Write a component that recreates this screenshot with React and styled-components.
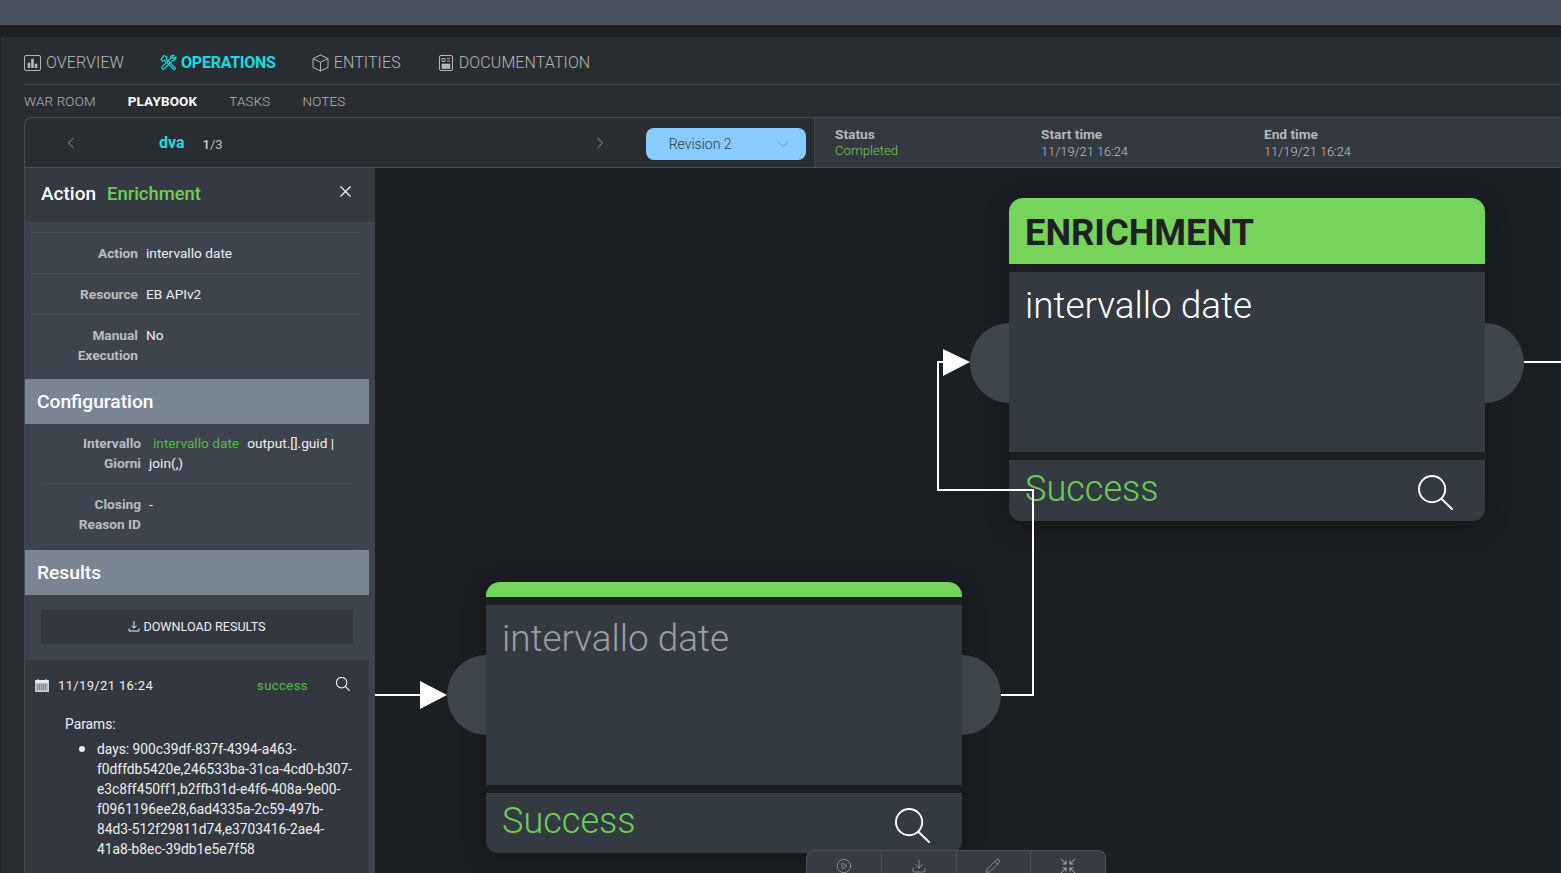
import React from 'react';
import styled, { createGlobalStyle } from 'styled-components';
import { X, ChevronLeft, ChevronRight, ChevronDown, CirclePlay, Download, Pencil } from 'lucide-react';

const GlobalStyle = createGlobalStyle`
  html, body {
    margin: 0;
    height: 100%;
    background: #1c1f24;
    font-family: Roboto, "Liberation Sans", sans-serif;
  }
  * { box-sizing: border-box; }
`

const Page = styled.div`
  display: flex;
  flex-direction: column;
  width: 1561px;
  height: 873px;
  overflow: hidden;
`

const TopBar = styled.div`
  height: 25px;
  flex: none;
  background: #4a525f;
`

const TopGap = styled.div`
  height: 12px;
  flex: none;
  background: #1c1f24;
`

const Main = styled.div`
  flex: 1;
  min-height: 0;
  display: flex;
  flex-direction: column;
  background: #292d32;
  padding-left: 24px;
  box-shadow: inset 1px 0 0 #1f2226;
`

const Tabs = styled.div`
  height: 48px;
  flex: none;
  display: flex;
  align-items: center;
  gap: 36px;
  padding-top: 4px;
  border-bottom: 1px solid #42474f;
`

const Tab = styled.div`
  display: flex;
  align-items: center;
  gap: ${p => (p.$active ? 4 : 5)}px;
  font-size: 16px;
  font-weight: ${p => (p.$active ? 700 : 300)};
  color: ${p => (p.$active ? '#12dfe0' : '#b4b8bd')};
  letter-spacing: ${p => (p.$active ? '-0.25px' : '0.1px')};
  svg { flex: none; }
`

const SubTabs = styled.div`
  height: 32px;
  flex: none;
  display: flex;
  align-items: center;
  gap: 32px;
`

const SubTab = styled.div`
  font-size: 13.4px;
  font-weight: ${p => (p.$active ? 700 : 300)};
  color: ${p => (p.$active ? '#ffffff' : '#b4b8bd')};
  letter-spacing: 0.2px;
`

const Workspace = styled.div`
  flex: 1;
  min-height: 0;
  display: flex;
  flex-direction: column;
  border-top: 1px solid #44484f;
  border-left: 1px solid #44484f;
  border-top-left-radius: 8px;
`

const Toolbar = styled.div`
  height: 50px;
  flex: none;
  display: flex;
  border-bottom: 1px solid #4a4e55;
`

const NavArea = styled.div`
  width: 790px;
  flex: none;
  display: flex;
  align-items: center;
  border-right: 1px solid #3e424a;
  color: #9499a0;
`

const NavArrow = styled.div`
  width: 20px;
  display: flex;
  justify-content: center;
  margin-left: ${p => p.$left}px;
`

const PlaybookName = styled.span`
  font-size: 16px;
  font-weight: 700;
  color: #1fdcdc;
  margin-left: 78px;
`

const Counter = styled.span`
  font-size: 13px;
  color: #b9bcc0;
  margin-left: 18px;
  margin-top: 3px;
  b { font-weight: 500; color: #d5d7da; }
`

const RevisionSelect = styled.div`
  width: 160px;
  height: 32px;
  margin: 2px 0 0 36px;
  padding: 0 13px 0 23px;
  display: flex;
  align-items: center;
  justify-content: space-between;
  background: #89cbff;
  border-radius: 8px;
  font-size: 14px;
  font-weight: 300;
  color: #2f3943;
  svg { color: #5f8db3; }
`

const StatusArea = styled.div`
  flex: 1;
  display: flex;
  padding-left: 20px;
  background: #343841;
`

const StatusCol = styled.div`
  width: ${p => p.$width}px;
  padding-top: 8px;
  line-height: 16px;
`

const StatusLabel = styled.div`
  font-size: 13.7px;
  font-weight: 700;
  color: #b4b7bb;
`

const StatusValue = styled.div`
  font-size: ${p => (p.$green ? '13.2px' : '12.8px')};
  font-weight: 300;
  margin-top: ${p => (p.$green ? 1 : 2)}px;
  color: ${p => (p.$green ? '#6ccf52' : '#c0c3c7')};
`

const Body = styled.div`
  flex: 1;
  min-height: 0;
  display: flex;
`

const Sidebar = styled.aside`
  width: 350px;
  flex: none;
  display: flex;
  flex-direction: column;
  background: #3e444e;
  overflow: hidden;
`

const SidebarHead = styled.div`
  height: 54px;
  flex: none;
  display: flex;
  align-items: center;
  padding: 0 20px 3px 16px;
  background: #353a42;
  font-size: 19px;
  font-weight: 500;
  color: #fff;
  span { color: #6ccf52; margin-left: 11px; font-size: 18.4px; }
  svg { margin-left: auto; margin-top: -4px; }
`

const Details = styled.div`
  width: 344px;
  padding: 10px 9px 0 6px;
`

const Row = styled.div`
  display: flex;
  gap: 8px;
  padding: 10px 0;
  border-top: 1px solid #4a505a;
  font-size: 13.7px;
  line-height: 20px;
  color: #eef0f2;
  min-height: ${p => p.$min || 41}px;
`

const RowLabel = styled.div`
  width: ${p => p.$width}px;
  flex: none;
  text-align: right;
  font-weight: 700;
  color: #b9bdc2;
`

const Section = styled.div`
  width: 344px;
  height: 45px;
  flex: none;
  display: flex;
  align-items: center;
  padding-left: 12px;
  background: #7a8594;
  font-size: 19.2px;
  font-weight: 500;
  color: #fff;
`

const Config = styled.div`
  width: 344px;
  height: 126px;
  flex: none;
  padding: 0 16px;
`

const ConfigRow = styled(Row)`
  border-top: 0;
  border-bottom: 1px solid #4a505a;
  padding: 9px 0 10px;
  min-height: 0;
  height: 60px;
  &:last-child { height: 61px; padding-top: 10px; }
`

const GreenText = styled.span`
  color: #56bb46;
  margin: 0 8px 0 4px;
`

const DownloadArea = styled.div`
  width: 344px;
  height: 65px;
  flex: none;
  padding: 15px 16px 0;
`

const DownloadButton = styled.div`
  height: 34px;
  padding-bottom: 2px;
  display: flex;
  align-items: center;
  justify-content: center;
  gap: 3px;
  background: #33373f;
  color: #f0f1f3;
  font-size: 12.6px;
`

const Results = styled.div`
  width: 344px;
  flex: 1;
  background: #33373f;
  color: #eef0f2;
  font-size: 13.8px;
`

const ResultHead = styled.div`
  height: 50px;
  display: flex;
  align-items: center;
  padding: 0 0 0 10px;
  font-size: 13px;
  letter-spacing: 0.35px;
`

const ResultDate = styled.span`
  margin-left: 9px;
`

const ResultStatus = styled.span`
  margin-left: 104px;
  font-size: 13.2px;
  color: #56bb46;
`

const ResultSearch = styled.span`
  display: flex;
  margin-left: 28px;
  margin-top: -3px;
`

const Params = styled.div`
  padding: 4px 0 0 40px;
  line-height: 20px;
  ul { margin: 4px 0 0; padding-left: 32px; width: 292px; }
  li::marker { font-size: 18px; }
`

const Canvas = styled.div`
  position: relative;
  flex: 1;
  background: #1b1e22;
  overflow: hidden;
`

const Wires = styled.svg`
  position: absolute;
  inset: 0;
  width: 100%;
  height: 100%;
  z-index: 3;
`

const Node = styled.div`
  position: absolute;
  left: ${p => p.$x}px;
  top: ${p => p.$y}px;
  width: 476px;
  z-index: 2;
  background: #1d1e24;
  border-radius: 14px 14px 12px 12px;
  box-shadow: 0 6px 24px rgba(0, 0, 0, 0.25);
`

const Port = styled.div`
  position: absolute;
  top: ${p => p.$top}px;
  ${p => p.$side}: -39px;
  width: 78px;
  height: 80px;
  border-radius: 50%;
  background: #3e454d;
  z-index: -1;
`

const NodeHead = styled.div`
  height: ${p => p.$height}px;
  padding: 2px 0 0 16px;
  display: flex;
  align-items: center;
  background: #77d45a;
  border-radius: 14px 14px 0 0;
  font-size: 36.3px;
  font-weight: 700;
  color: #1f2126;
`

const NodeBody = styled.div`
  height: 180px;
  margin-top: 8px;
  padding: 9px 16px;
  background: #343a42;
  font-size: 36.9px;
  line-height: 50px;
  font-weight: 300;
  color: ${p => (p.$dim ? '#9a9ea5' : '#ffffff')};
`

const NodeFoot = styled.div`
  height: ${p => p.$height}px;
  margin-top: 8px;
  padding: 0 32px 4px 16px;
  display: flex;
  align-items: center;
  justify-content: space-between;
  background: #343a42;
  border-radius: 0 0 12px 12px;
  font-size: 36.1px;
  font-weight: 300;
  color: #6ccf52;
  svg { margin-top: 8px; }
`

const Actions = styled.div`
  position: absolute;
  left: 431px;
  bottom: 0;
  width: 300px;
  height: 23px;
  z-index: 4;
  display: flex;
  background: #363b44;
  border: 1px solid #4c5159;
  border-bottom: 0;
  border-radius: 8px 8px 0 0;
  overflow: hidden;
`

const ActionCell = styled.div`
  flex: 1;
  display: flex;
  justify-content: center;
  padding-top: 7px;
  color: #b0b4b9;
  & + & { border-left: 1px solid #4c5159; }
`

const OverviewIcon = () => (
  <svg width="17" height="17" viewBox="0 0 17 17" fill="none" stroke="#b4b8bd">
    <rect x="0.5" y="1.5" width="16" height="15" rx="1.5" />
    <path d="M4 14V9h2v5M7.5 14V5h2v9M11 14v-4h2v4" fill="#b4b8bd" strokeWidth="0.6" />
  </svg>
)

const ToolsIcon = () => (
  <svg width="17" height="17" viewBox="0 0 17 17" fill="none" stroke="#12dfe0" strokeWidth="1.2">
    <path d="M4 1.5 7 3.2 6.2 5 15.5 14.2 14 15.7 4.7 6.4 3 7.2 1 5.5Z" />
    <path d="M15.8 2.8 13.6 5 12 3.6 14 1.4C12 .8 10 2.4 10.4 4.6L2 12.8C1 14 3 16 4.2 15L12.4 6.6C14.6 7 16.4 5 15.8 2.8Z" />
  </svg>
)

const BoxIcon = () => (
  <svg width="17" height="18" viewBox="0 0 17 18" fill="none" stroke="#b4b8bd" strokeWidth="1">
    <path d="M8.5 1 16 4.6V13.4L8.5 17 1 13.4V4.6Z" />
    <path d="M1 4.6 8.5 8.2 16 4.6M8.5 8.2V17" />
  </svg>
)

const DocIcon = () => (
  <svg width="16" height="18" viewBox="0 0 16 18" fill="none" stroke="#b4b8bd" style={{ marginLeft: 1 }}>
    <rect x="1.5" y="1.5" width="13" height="15" rx="1.5" />
    <path d="M4 4.5h3v3H4zM9 4.5h3M9 7h3" strokeWidth="0.9" />
    <path d="M4 10h8v4.5H4z" fill="#b4b8bd" strokeWidth="0.6" />
  </svg>
)

const CalendarIcon = () => (
  <svg width="14" height="13" viewBox="0 0 14 13" fill="none">
    <rect x="0.5" y="1.5" width="13" height="11" fill="#b9bcc0" stroke="#c9ccd0" />
    <path d="M1 1h12v3H1z" fill="#e8e9ea" />
    <path d="M3 0v2M11 0v2" stroke="#e8e9ea" />
    <path d="M2 6h10M2 8h10M2 10h10" stroke="#4f535a" strokeDasharray="1.2 .8" />
  </svg>
)

const SearchIcon = ({ size = 14, width = 1.3 }) => (
  <svg width={size} height={size} viewBox="0 0 36 36" fill="none" stroke="#ffffff" strokeWidth={width} strokeLinecap="round">
    <circle cx="14.5" cy="14.5" r="13.5" />
    <path d="M24 24.5 35 35" />
  </svg>
)

const DownloadIcon = () => (
  <svg width="12" height="12" viewBox="0 0 12 12" fill="none" stroke="#f0f1f3" strokeWidth="1">
    <path d="M6 1v7M3.4 5.6 6 8.2l2.6-2.6M1 8.5V11h10V8.5" />
  </svg>
)

const CollapseIcon = () => (
  <svg width="16" height="16" viewBox="0 0 16 16" fill="none" stroke="currentColor" strokeWidth="1">
    <path d="M1 1 6 6M6 2.5V6H2.5" />
    <path d="M15 1 10 6M10 2.5V6H13.5" />
    <path d="M1 15 6 10M6 13.5V10H2.5" />
    <path d="M15 15 10 10M10 13.5V10H13.5" />
  </svg>
)

const FlowNode = ({ x, y, title, headHeight, footHeight, portTop, dim }) => (
  <Node $x={x} $y={y}>
    <Port $side="left" $top={portTop} />
    <Port $side="right" $top={portTop} />
    <NodeHead $height={headHeight}>{title}</NodeHead>
    <NodeBody $dim={dim}>intervallo date</NodeBody>
    <NodeFoot $height={footHeight}>
      Success
      <SearchIcon size={35} width={2} />
    </NodeFoot>
  </Node>
)

export default function App() {
  return (
    <Page>
      <GlobalStyle />
      <TopBar />
      <TopGap />
      <Main>
        <Tabs>
          <Tab><OverviewIcon />OVERVIEW</Tab>
          <Tab $active><ToolsIcon />OPERATIONS</Tab>
          <Tab><BoxIcon />ENTITIES</Tab>
          <Tab><DocIcon />DOCUMENTATION</Tab>
        </Tabs>
        <SubTabs>
          <SubTab>WAR ROOM</SubTab>
          <SubTab $active>PLAYBOOK</SubTab>
          <SubTab>TASKS</SubTab>
          <SubTab>NOTES</SubTab>
        </SubTabs>
        <Workspace>
          <Toolbar>
            <NavArea>
              <NavArrow $left={36}><ChevronLeft size={22} strokeWidth={1.2} /></NavArrow>
              <PlaybookName>dva</PlaybookName>
              <Counter><b>1</b>/3</Counter>
              <NavArrow $left={367}><ChevronRight size={22} strokeWidth={1.2} /></NavArrow>
              <RevisionSelect>Revision 2<ChevronDown size={20} strokeWidth={1} /></RevisionSelect>
            </NavArea>
            <StatusArea>
              <StatusCol $width={206}>
                <StatusLabel>Status</StatusLabel>
                <StatusValue $green>Completed</StatusValue>
              </StatusCol>
              <StatusCol $width={223}>
                <StatusLabel>Start time</StatusLabel>
                <StatusValue>11/19/21 16:24</StatusValue>
              </StatusCol>
              <StatusCol $width={223}>
                <StatusLabel>End time</StatusLabel>
                <StatusValue>11/19/21 16:24</StatusValue>
              </StatusCol>
            </StatusArea>
          </Toolbar>
          <Body>
            <Sidebar>
              <SidebarHead>
                Action<span>Enrichment</span>
                <X size={19} strokeWidth={1.4} />
              </SidebarHead>
              <Details>
                <Row><RowLabel $width={107}>Action</RowLabel>intervallo date</Row>
                <Row><RowLabel $width={107}>Resource</RowLabel>EB APIv2</Row>
                <Row $min={65}><RowLabel $width={107}>Manual<br />Execution</RowLabel>No</Row>
              </Details>
              <Section>Configuration</Section>
              <Config>
                <ConfigRow>
                  <RowLabel $width={100}>Intervallo<br />Giorni</RowLabel>
                  <div><GreenText>intervallo date</GreenText>output.[].guid |<br />join(,)</div>
                </ConfigRow>
                <ConfigRow>
                  <RowLabel $width={100}>Closing<br />Reason ID</RowLabel>
                  -
                </ConfigRow>
              </Config>
              <Section>Results</Section>
              <DownloadArea>
                <DownloadButton><DownloadIcon />DOWNLOAD RESULTS</DownloadButton>
              </DownloadArea>
              <Results>
                <ResultHead>
                  <CalendarIcon />
                  <ResultDate>11/19/21 16:24</ResultDate>
                  <ResultStatus>success</ResultStatus>
                  <ResultSearch><SearchIcon size={14} width={2.6} /></ResultSearch>
                </ResultHead>
                <Params>
                  Params:
                  <ul>
                    <li>days: 900c39df-837f-4394-a463-f0dffdb5420e,246533ba-31ca-4cd0-b307-e3c8ff450ff1,b2ffb31d-e4f6-408a-9e00-f0961196ee28,6ad4335a-2c59-497b-84d3-512f29811d74,e3703416-2ae4-41a8-b8ec-39db1e5e7f58</li>
                  </ul>
                </Params>
              </Results>
            </Sidebar>
            <Canvas>
              <FlowNode x={634} y={30} title="ENRICHMENT" headHeight={66} footHeight={61} portTop={125} />
              <FlowNode x={111} y={414} title="" headHeight={15} footHeight={60} portTop={73} dim />
              <Wires viewBox="0 0 1186 705" fill="none">
                <path d="M0 527H46M626 527H658V322H563V194H568" stroke="#fff" strokeWidth="2" />
                <path d="M1149 194H1186" stroke="#fff" strokeWidth="2" />
                <path d="M45 513 72 527 45 541ZM568 181 595 194 568 208Z" fill="#fff" />
              </Wires>
              <Actions>
                <ActionCell><CirclePlay size={16} strokeWidth={1} /></ActionCell>
                <ActionCell><Download size={16} strokeWidth={1} /></ActionCell>
                <ActionCell><Pencil size={16} strokeWidth={1} /></ActionCell>
                <ActionCell><CollapseIcon /></ActionCell>
              </Actions>
            </Canvas>
          </Body>
        </Workspace>
      </Main>
    </Page>
  );
}
